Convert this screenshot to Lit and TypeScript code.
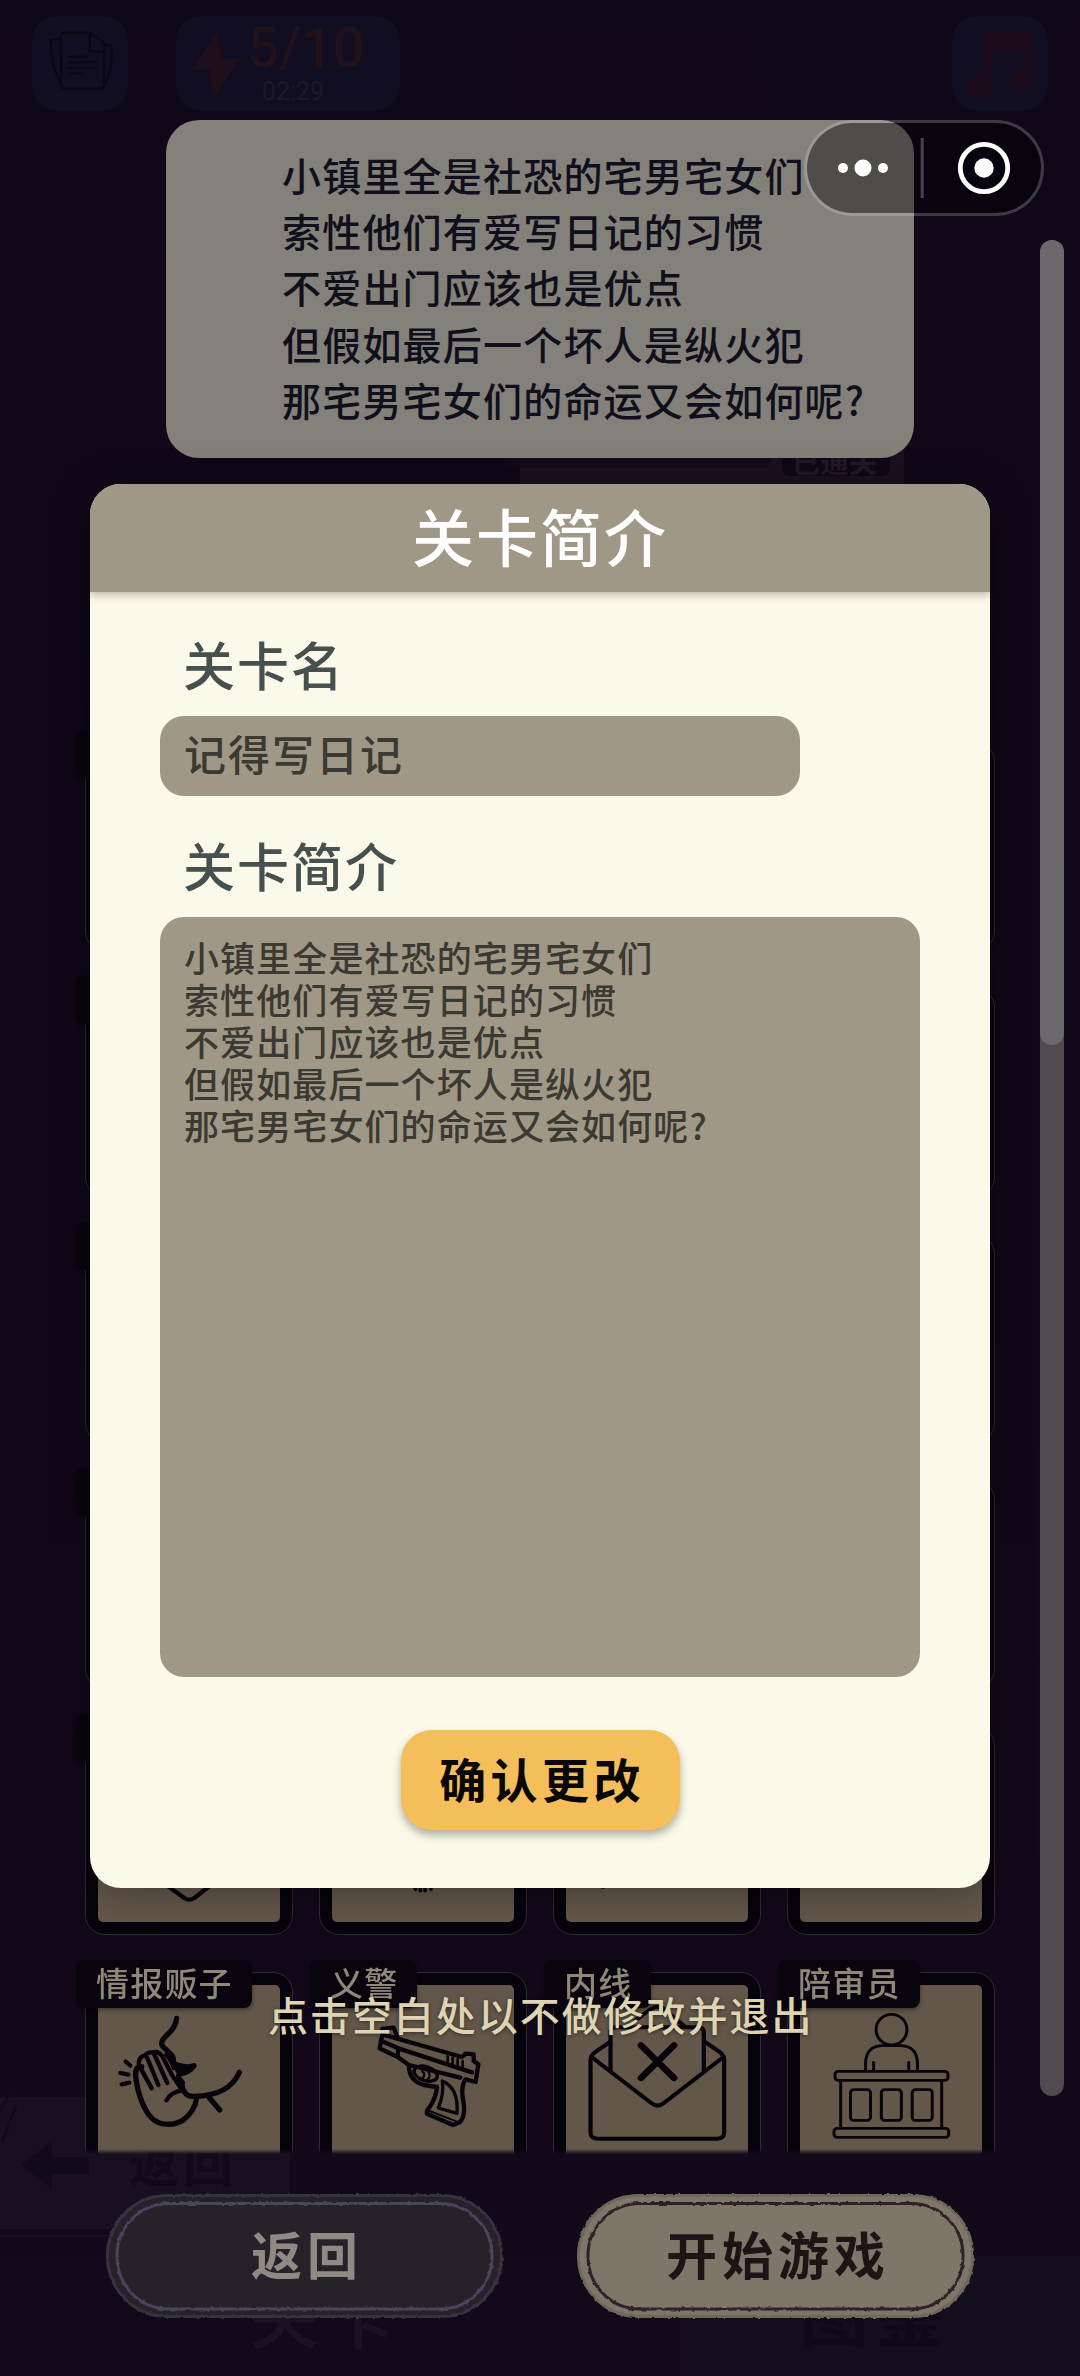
import { LitElement, html, css, svg, nothing } from "lit";
import { customElement, property } from "lit/decorators.js";

const LINES = [
  "小镇里全是社恐的宅男宅女们",
  "索性他们有爱写日记的习惯",
  "不爱出门应该也是优点",
  "但假如最后一个坏人是纵火犯",
  "那宅男宅女们的命运又会如何呢?",
];

const whisper = svg`<svg viewBox="74 97 624 627" preserveAspectRatio="none">
  <g class="ln" stroke-width="16">
    <path d="M349 236C346 266 326 279 309 298C300 312 304 320 314 327L334 346Q342 358 338 370Q370 388 401 378Q386 399 362 402Q352 406 356 416L366 428Q363 444 372 456Q380 471 402 470C470 468 515 448 537 398"/>
    <path d="M447 474L478 511M244 381Q224 378 226 410C232 465 252 512 274 535C296 558 340 560 370 540Q402 515 408 480"/>
    <path d="M338 370Q370 388 401 378Q380 385 350 398Z" fill="#08040c" stroke-width="6"/>
  </g>
  <g class="ln" stroke-width="13">
    <path d="M240 384L274 446M236 382Q232 352 252 347Q258 348 263 360L294 436M254 347Q266 334 280 340L321 430M278 338Q294 332 306 350L336 408L364 450M318 344Q332 360 340 385M318 482Q334 456 364 453"/>
    <path d="M196 366L210 378M180 400L204 405M184 434L207 429"/>
  </g></svg>`;

const pistol = svg`<svg viewBox="776 97 624 627" preserveAspectRatio="none">
  <g class="ln" stroke-width="13">
    <path d="M966 284L1205 352L1216 342L1240 344L1240 364L1254 374L1250 400L1246 427L1216 419Q1201 440 1208 478Q1218 530 1198 548L1178 556L1100 522Q1097 512 1108 502Q1128 472 1130 442L1090 436Q1044 422 1046 376L1012 352L958 326Z"/>
    <path d="M966 268L1000 264L1010 290M962 303L1014 326L1012 350M1014 326L1235 398M1046 376L1200 414"/>
    <path d="M1146 424Q1196 446 1190 521L1134 505Q1152 462 1146 424Z" stroke-width="10"/>
    <ellipse cx="1096" cy="402" rx="36" ry="21" transform="rotate(18 1096 402)" stroke-width="10"/>
    <path d="M1086 395Q1098 404 1086 416M1104 396Q1114 408 1100 422" stroke-width="7"/>
    <path d="M1108 514L1190 546" stroke-width="6"/>
    <path d="M1162 350V370M1177 354V376M1192 359V380M1207 365V384" stroke-width="8"/>
  </g></svg>`;

const letter = svg`<svg viewBox="65 97 593 627" preserveAspectRatio="none">
  <g class="ln" stroke-width="12">
    <path d="M229 306L187 336Q172 347 172 362V578Q172 597 191 597H535Q553 597 553 578V362Q553 347 539 336L497 306"/>
    <path d="M175 352L345 490Q363 506 381 490L551 352M229 396V280Q229 263 245 263H480Q495 263 495 280V398M300 242L344 208Q362 195 381 208L440 260"/>
    <path d="M316 317L410 415M410 317L316 415" stroke-width="19"/>
  </g></svg>`;

const jury = svg`<svg viewBox="732 97 593 627" preserveAspectRatio="none">
  <g class="ln" stroke-width="8.5">
    <ellipse cx="1030" cy="270" rx="44" ry="46"/>
    <path d="M956 392V370Q958 320 1002 318H1058Q1102 320 1104 370V392M979 368V392M1079 368V392M885 424V562M1173 424V562"/>
    <rect x="869" y="395" width="322" height="27" rx="9"/><rect x="866" y="566" width="327" height="27" rx="9"/>
    <rect x="913" y="450" width="57" height="92" rx="9"/><rect x="1001" y="450" width="57" height="92" rx="9"/><rect x="1089" y="450" width="57" height="92" rx="9"/>
  </g></svg>`;

const diamond = svg`<svg viewBox="74 258 624 627" preserveAspectRatio="none"><path class="ln" stroke-width="13" d="M200 650L372 774Q387 784 402 774L560 650"/></svg>`;
const paw = svg`<svg viewBox="776 258 624 627" preserveAspectRatio="none"><path class="ln" stroke-width="11" d="M1062 740L1066 748M1080 740V752M1094 740V752M1112 740V748"/></svg>`;
const tick = svg`<svg viewBox="37 258 604 627" preserveAspectRatio="none"><path class="ln" stroke-width="12" d="M182 730V741"/></svg>`;

@customElement("role-card")
export class RoleCard extends LitElement {
  @property() label = "";
  @property({ attribute: false }) art: unknown = nothing;
  static styles = css`
    :host { display: block; position: relative; box-sizing: border-box; width: 208px; height: 209px;
      border: 1.5px solid #302b2d; border-radius: 20px; background: #06030c; padding: 12px; }
    .face { height: 100%; border-radius: 5px; background: #63574a; }
    svg { position: absolute; left: -1px; top: -1px; width: 208px; height: 209px; }
    .ln { fill: none; stroke: #08040c; stroke-linecap: round; stroke-linejoin: round; }
    .tag { position: absolute; left: -10px; top: -13px; height: 48px; min-width: 60px; box-sizing: border-box;
      padding: 0 19px 0 20px; border-radius: 8px; background: #09050f; color: #8d8878;
      font: 500 33px/45px "Noto Sans CJK SC", sans-serif; letter-spacing: 1.2px; white-space: nowrap;
      box-shadow: 0 2px 4px rgba(0,0,0,.4); }
  `;
  render() {
    return html`<div class="face"></div>${this.art}<div class="tag">${this.label}</div>`;
  }
}

@customElement("app-root")
export class AppRoot extends LitElement {
  static styles = css`
    :host { display: grid; width: 1080px; height: 2376px; overflow: hidden; position: relative;
      background: linear-gradient(#0f0818, #100819 60%, #120a1b);
      font-family: "Noto Sans CJK SC", sans-serif; }
    :host > * { grid-area: 1 / 1; }
    .decor { width: 1080px; height: 2376px; font-family: "Noto Sans CJK SC", sans-serif; }

    .page { display: flex; flex-direction: column; padding-top: 16px; box-sizing: border-box; height: 2376px; }
    .top { display: flex; padding: 0 32px; height: 95px; }
    .tile { width: 96px; height: 95px; border-radius: 26px; background: #100e20; }
    .tile svg { display: block; width: 100%; height: 100%; }
    .energy { width: 224px; height: 95px; margin-left: 48px; border-radius: 26px; background: #100e20; display: flex; }
    .energy svg { width: 78px; height: 95px; }
    .counts { font-family: Roboto, "Noto Sans", sans-serif; display: flex; flex-direction: column; align-items: center; width: 104px; }
    .big { font-size: 56px; line-height: 65px; color: #20111a; white-space: nowrap; font-weight: 500; }
    .small { font-size: 25px; line-height: 22px; color: #1b1928; margin-left: -26px; }
    .spring { flex: 1; }
    .story { margin: 9px 0 0 166px; width: 748px; height: 338px; box-sizing: border-box; border-radius: 33px; background: #84807a;
      padding: 26px 0 0 116px; color: #10101c; font-size: 39px; line-height: 56.2px; letter-spacing: 1.2px; font-weight: 500; white-space: nowrap; }
    .roles { margin-top: 26px; height: 1670px; overflow: hidden; padding: 258px 0 0 85px; box-sizing: border-box;
      display: grid; grid-template-columns: repeat(4, 208px); grid-auto-rows: 209px; gap: 37px 26px;
      -webkit-mask-image: linear-gradient(#000 calc(100% - 5px), transparent); mask-image: linear-gradient(#000 calc(100% - 5px), transparent); }
    .actions { margin-top: 40px; padding: 0 106px; display: flex; justify-content: space-between; }
    .pill { width: 397px; height: 124px; display: grid; color: #8f8a84; }
    .pill > * { grid-area: 1 / 1; }
    .pill svg { width: 397px; height: 124px; overflow: visible; }
    .pill span { z-index: 1; text-align: center; font-size: 51px; line-height: 118px; font-weight: 700; letter-spacing: 5px; padding-left: 5px; }
    .pill.go { color: #1f1315; }

    .rail { justify-self: end; margin: 240px 16px 0 0; width: 24px; height: 1856px; border-radius: 12px; background: #504a51; }
    .thumb { height: 805px; border-radius: 12px; background: #6b696e; }

    .dialog { margin: 484px 0 0 90px; width: 900px; height: 1404px; border-radius: 31px; background: #fbf9e9; overflow: hidden;
      box-shadow: 0 4px 40px rgba(0,0,0,.35); display: flex; flex-direction: column; z-index: 2; }
    .head { height: 108px; background: #a09887; color: #fff; font-size: 62px; line-height: 102px; font-weight: 500; text-align: center;
      letter-spacing: 2px; box-shadow: 0 3px 8px rgba(90,85,60,.4); flex: none; }
    .form { padding: 0 70px; display: flex; flex-direction: column; }
    .label { color: #46504e; font-size: 52px; line-height: 60px; letter-spacing: 2px; font-weight: 500; padding-left: 23px; margin-top: 42px; height: 60px; }
    .label.second { margin-top: 39px; }
    .input, .area { background: #a09887; color: #3b3932; border-radius: 24px; box-sizing: border-box; white-space: nowrap; font-weight: 500; }
    .input { margin-top: 22px; width: 640px; height: 80px; padding-left: 24px; font-size: 42px; line-height: 74px; letter-spacing: 2px; }
    .area { margin-top: 22px; height: 760px; padding: 19px 0 0 24px; font-size: 35px; line-height: 42px; letter-spacing: 1.1px; }
    .ok { align-self: center; margin-top: 53px; width: 279px; height: 100px; border-radius: 31px; background: #f4be5a; color: #0a0806;
      font-size: 47px; line-height: 96px; font-weight: 700; text-align: center; letter-spacing: 4.4px; padding-left: 4px; box-sizing: border-box;
      box-shadow: 0 5px 9px rgba(60,60,40,.4); }
    .hint { z-index: 3; margin: 1988px 0 0 268px; height: 56px; color: #ded4b2; font-size: 40px; line-height: 52px; letter-spacing: 1.95px;
      white-space: nowrap; font-weight: 500; text-shadow: 0 1px 4px rgba(0,0,0,.5); }

    .capsule { z-index: 4; margin: 120px 0 0 804px; box-sizing: border-box; width: 240px; height: 96px; border-radius: 48px;
      border: 3px solid rgba(255,255,255,.2); background: rgba(0,0,0,.4); background-clip: padding-box; }
    .capsule svg { display: block; margin: -3px; width: 240px; height: 96px; }
  `;

  private pill(text: string, cls: string, fill: string, edge: string, line: string) {
    return html`<div class="pill ${cls}">
      <svg viewBox="0 0 397 124">
        <defs><filter id="rough" x="-5%" y="-5%" width="110%" height="110%">
          <feTurbulence type="fractalNoise" baseFrequency="0.2" numOctaves="2" seed="4" />
          <feDisplacementMap in="SourceGraphic" scale="3" xChannelSelector="R" yChannelSelector="G" /></filter></defs>
        <rect x="1.5" y="1.5" width="394" height="121" rx="60" fill=${fill} stroke=${edge} stroke-width="3" filter="url(#rough)" />
        <rect x="11" y="9.5" width="375" height="105.5" rx="52" fill="none" stroke=${line} stroke-width="3" filter="url(#rough)" />
      </svg><span>${text}</span></div>`;
  }

  render() {
    const labels = ["情报贩子", "义警", "内线", "陪审员"];
    const art = [whisper, pistol, letter, jury];
    const partial = [diamond, paw, tick, nothing];
    const cards = Array.from({ length: 24 }, (_, i) => ({
      label: i >= 20 ? labels[i - 20] : "",
      art: i >= 20 ? art[i - 20] : i >= 16 ? partial[i - 16] : nothing,
    }));
    return html`
      <svg class="decor" viewBox="0 0 1080 2376">
        <rect x="520" y="440" width="384" height="50" fill="#191121" />
        <rect x="505" y="440" width="265" height="28" rx="6" fill="#120a1a" />
        <rect x="782" y="440" width="108" height="36" rx="8" fill="#0f0817" />
        <text x="792" y="473" font-size="28" font-weight="700" letter-spacing="0.5" fill="#201927">已通关</text>
        <path d="M0 2097H290V2227H0Z" fill="#181020" />
        <path d="M0 2228H110M0 2236H110" stroke="#1a1224" stroke-width="2" />
        <path d="M0 2112Q12 2086 16 2096M2 2142L16 2106" stroke="#120b1b" stroke-width="3" fill="none" />
        <path d="M21 2165L52 2141V2157H89V2174H52V2189Z" fill="#100a1a" />
        <text x="129" y="2182" font-size="50" font-weight="700" letter-spacing="4" fill="#100a1a">返回</text>
        <path d="M680 2256H1080V2376H680Z" fill="#130d1d" />
        <text x="249" y="2343" font-size="70" font-weight="500" letter-spacing="6" fill="#1a1222">关卡</text>
        <text x="800" y="2341" font-size="68" font-weight="700" letter-spacing="8" fill="#100918">图鉴</text>
      </svg>

      <div class="page">
        <div class="top">
          <div class="tile"><svg viewBox="92 48 279 287" preserveAspectRatio="none">
            <g fill="none" stroke="#0b0714" stroke-width="6" stroke-linejoin="round" stroke-linecap="round">
              <path d="M188 98H260L302 128V255Q302 267 290 267H188Q176 267 176 255V112Q176 98 188 98ZM260 98V155H302M176 118L146 120Q150 215 174 245M302 134L323 138Q325 215 306 250"/>
              <path d="M200 170H250M200 188H272M200 205H272M200 222H242"/></g></svg></div>
          <div class="energy">
            <svg viewBox="512 48 227 287" preserveAspectRatio="none"><path d="M634 96L560 210H612L620 294L696 178H645Z" fill="#1f0f19"/></svg>
            <div class="counts"><div class="big">5/10</div><div class="small">02:29</div></div>
          </div>
          <div class="spring"></div>
          <div class="tile"><svg viewBox="1197 48 278 287" preserveAspectRatio="none">
            <path d="M1290 105Q1292 92 1305 92H1415Q1428 92 1428 104V240Q1425 275 1392 275Q1365 272 1366 245Q1370 215 1402 205V150L1316 160V250Q1314 296 1275 298Q1242 292 1243 255Q1247 222 1290 214Z" fill="#1b0a1a"/></svg></div>
        </div>
        <div class="story">${LINES.map((l) => html`<div>${l}</div>`)}</div>
        <div class="roles">${cards.map((c) => html`<role-card .label=${c.label} .art=${c.art}></role-card>`)}</div>
        <div class="actions">
          ${this.pill("返回", "", "#27242a", "#37333f", "#48445a")}
          ${this.pill("开始游戏", "go", "#7f766a", "#70685d", "#2e2428")}
        </div>
      </div>

      <div class="rail"><div class="thumb"></div></div>

      <div class="dialog">
        <div class="head">关卡简介</div>
        <div class="form">
          <div class="label">关卡名</div>
          <div class="input">记得写日记</div>
          <div class="label second">关卡简介</div>
          <div class="area">${LINES.map((l) => html`<div>${l}</div>`)}</div>
          <div class="ok">确认更改</div>
        </div>
      </div>

      <div class="hint">点击空白处以不做修改并退出</div>

      <div class="capsule"><svg viewBox="804 120 240 96">
        <g fill="#fff"><circle cx="843" cy="168" r="5"/><circle cx="863" cy="168" r="8.5"/><circle cx="883" cy="168" r="5"/><circle cx="984" cy="168" r="9.7"/></g>
        <circle cx="984" cy="168" r="23.7" fill="none" stroke="#fff" stroke-width="4.8"/>
        <rect x="920.7" y="138" width="3" height="60" fill="#fff" opacity=".25"/></svg></div>
    `;
  }
}
